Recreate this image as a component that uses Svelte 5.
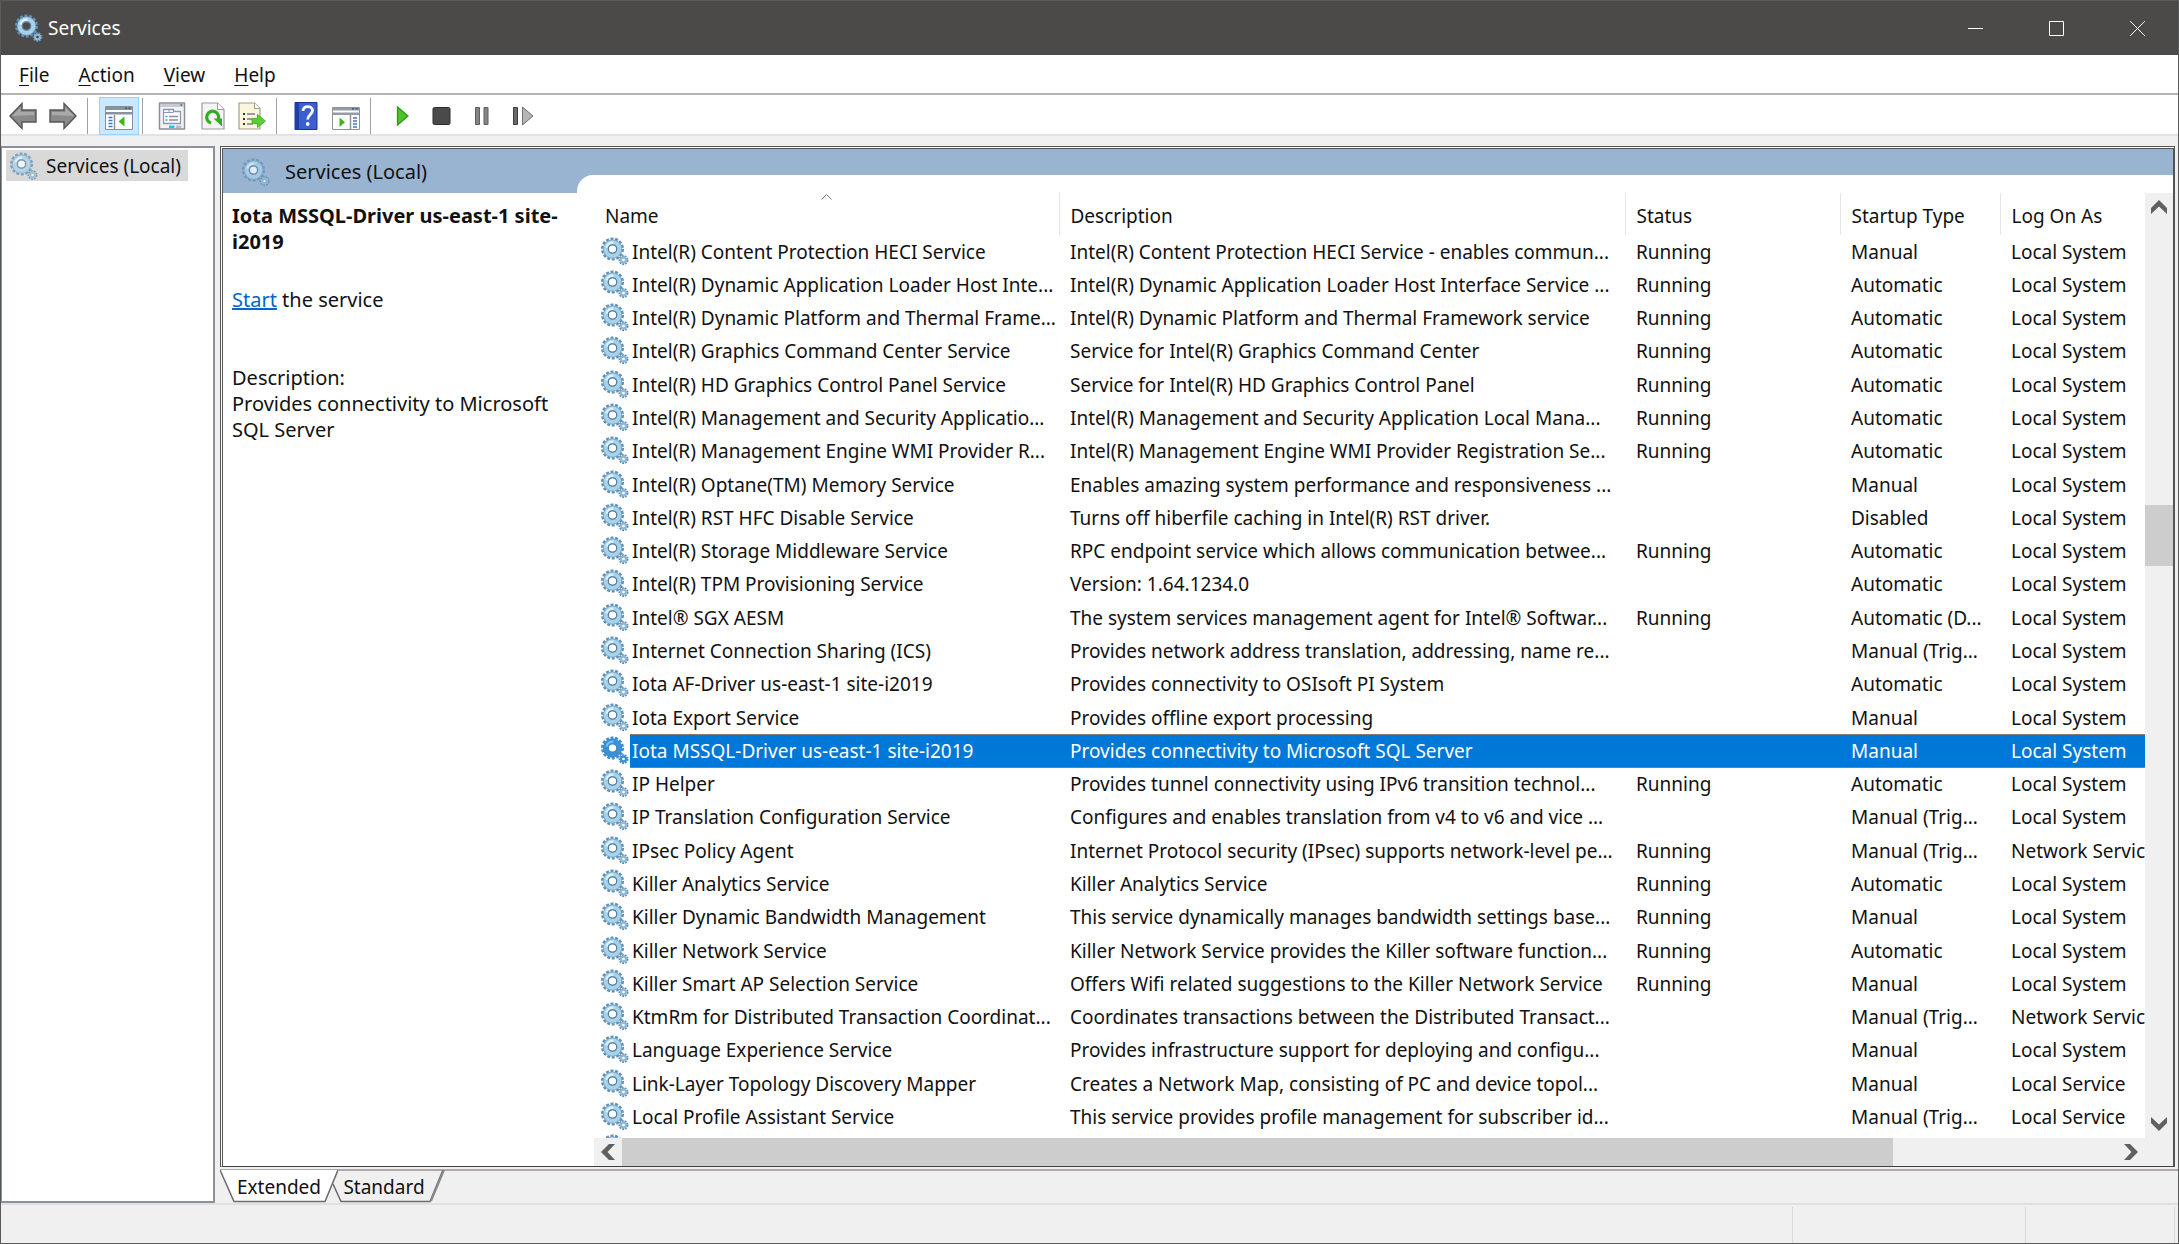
<script lang="ts">
    const menus = ["File", "Action", "View", "Help"];

    const columns = ["Name", "Description", "Status", "Startup Type", "Log On As"];

    let selected = $state(15);

    const services = [
        ["Intel(R) Content Protection HECI Service", "Intel(R) Content Protection HECI Service - enables commun...", "Running", "Manual", "Local System"],
        ["Intel(R) Dynamic Application Loader Host Inte...", "Intel(R) Dynamic Application Loader Host Interface Service ...", "Running", "Automatic", "Local System"],
        ["Intel(R) Dynamic Platform and Thermal Frame...", "Intel(R) Dynamic Platform and Thermal Framework service", "Running", "Automatic", "Local System"],
        ["Intel(R) Graphics Command Center Service", "Service for Intel(R) Graphics Command Center", "Running", "Automatic", "Local System"],
        ["Intel(R) HD Graphics Control Panel Service", "Service for Intel(R) HD Graphics Control Panel", "Running", "Automatic", "Local System"],
        ["Intel(R) Management and Security Applicatio...", "Intel(R) Management and Security Application Local Mana...", "Running", "Automatic", "Local System"],
        ["Intel(R) Management Engine WMI Provider R...", "Intel(R) Management Engine WMI Provider Registration Se...", "Running", "Automatic", "Local System"],
        ["Intel(R) Optane(TM) Memory Service", "Enables amazing system performance and responsiveness ...", "", "Manual", "Local System"],
        ["Intel(R) RST HFC Disable Service", "Turns off hiberfile caching in Intel(R) RST driver.", "", "Disabled", "Local System"],
        ["Intel(R) Storage Middleware Service", "RPC endpoint service which allows communication betwee...", "Running", "Automatic", "Local System"],
        ["Intel(R) TPM Provisioning Service", "Version: 1.64.1234.0", "", "Automatic", "Local System"],
        ["Intel® SGX AESM", "The system services management agent for Intel® Softwar...", "Running", "Automatic (D...", "Local System"],
        ["Internet Connection Sharing (ICS)", "Provides network address translation, addressing, name re...", "", "Manual (Trig...", "Local System"],
        ["Iota AF-Driver us-east-1 site-i2019", "Provides connectivity to OSIsoft PI System", "", "Automatic", "Local System"],
        ["Iota Export Service", "Provides offline export processing", "", "Manual", "Local System"],
        ["Iota MSSQL-Driver us-east-1 site-i2019", "Provides connectivity to Microsoft SQL Server", "", "Manual", "Local System"],
        ["IP Helper", "Provides tunnel connectivity using IPv6 transition technol...", "Running", "Automatic", "Local System"],
        ["IP Translation Configuration Service", "Configures and enables translation from v4 to v6 and vice ...", "", "Manual (Trig...", "Local System"],
        ["IPsec Policy Agent", "Internet Protocol security (IPsec) supports network-level pe...", "Running", "Manual (Trig...", "Network Service"],
        ["Killer Analytics Service", "Killer Analytics Service", "Running", "Automatic", "Local System"],
        ["Killer Dynamic Bandwidth Management", "This service dynamically manages bandwidth settings base...", "Running", "Manual", "Local System"],
        ["Killer Network Service", "Killer Network Service provides the Killer software function...", "Running", "Automatic", "Local System"],
        ["Killer Smart AP Selection Service", "Offers Wifi related suggestions to the Killer Network Service", "Running", "Manual", "Local System"],
        ["KtmRm for Distributed Transaction Coordinat...", "Coordinates transactions between the Distributed Transact...", "", "Manual (Trig...", "Network Service"],
        ["Language Experience Service", "Provides infrastructure support for deploying and configu...", "", "Manual", "Local System"],
        ["Link-Layer Topology Discovery Mapper", "Creates a Network Map, consisting of PC and device topol...", "", "Manual", "Local Service"],
        ["Local Profile Assistant Service", "This service provides profile management for subscriber id...", "", "Manual (Trig...", "Local Service"],
    ];
</script>

{#snippet gear(pale = false)}
    <svg class="gear" class:pale width="28" height="28" viewBox="0 0 28 28" aria-hidden="true">
        <circle cx="11.5" cy="12" r="10" fill="none" stroke="#5f90b6" stroke-width="3" stroke-dasharray="2.9 1.588" />
        <circle cx="11.5" cy="12" r="6.7" fill="none" stroke="#7aa6c8" stroke-width="6" />
        <circle cx="11.5" cy="12" r="6.7" fill="none" stroke="#a8d2ea" stroke-width="4.2" />
        <path d="M5.500 10.500a6.200 6.200 0 0 1 7-4.800" fill="none" stroke="#e0f3fc" stroke-width="2.200" />
        <circle cx="11.500" cy="12" r="4.200" fill="none" stroke="#587f9f" stroke-width="1.300" />
        <circle class="hole" cx="11.500" cy="12" r="3.300" />
        <circle cx="22.500" cy="23" r="4" fill="none" stroke="#5f8db0" stroke-width="2" stroke-dasharray="1.800 .993" />
        <circle cx="22.500" cy="23" r="2.400" fill="none" stroke="#8fb9d5" stroke-width="2.400" />
        <circle class="hole" cx="22.500" cy="23" r="1.100" />
    </svg>
{/snippet}

{#snippet chevron(dir: string)}
    <svg class="chevron {dir}" width="16" height="14" viewBox="0 0 16 14" aria-hidden="true">
        <path d="M0 8L8 0l8 8v6L8 6.500 0 14z" fill="#606060" />
    </svg>
{/snippet}

<div class="window">
    <header class="titlebar">
        {@render gear()}
        <h1>Services</h1>
        <div class="controls">
            <button aria-label="Minimize">
                <svg width="15" height="15" viewBox="0 0 15 15"><path d="M0 7.500h15" /></svg>
            </button>
            <button aria-label="Maximize">
                <svg width="15" height="15" viewBox="0 0 15 15"><path d="M.5.5h14v14H.5z" /></svg>
            </button>
            <button aria-label="Close">
                <svg width="15" height="15" viewBox="0 0 15 15"><path d="M0 0l15 15M15 0L0 15" /></svg>
            </button>
        </div>
    </header>

    <nav class="menubar">
        {#each menus as menu}
            <button><u>{menu[0]}</u>{menu.slice(1)}</button>
        {/each}
    </nav>

    <div class="toolbar">
        <button class="tool" aria-label="Back">
            <svg width="28" height="28" viewBox="0 0 28 28">
                <path d="M1 14L13 1.500V8h14v12H13v6.500z" fill="#8a8a8a" stroke="#555" stroke-width="1.400" />
                <path d="M3 14l8.500-8.700V10H25v3z" fill="#a9a9a9" />
            </svg>
        </button>
        <button class="tool" aria-label="Forward">
            <svg width="28" height="28" viewBox="0 0 28 28">
                <path d="M27 14L15 1.500V8H1v12h14v6.500z" fill="#8a8a8a" stroke="#555" stroke-width="1.400" />
                <path d="M25 14l-8.500-8.700V10H3v3z" fill="#a9a9a9" />
            </svg>
        </button>
        <span class="sep"></span>
        <button class="tool active" aria-label="Show/Hide Console Tree">
            <svg width="28" height="28" viewBox="0 0 28 28">
                <path d="M.5 4.500h27v23H.5z" fill="#fff" stroke="#858d98" />
                <path d="M1 5h26v3H1zM1 10h26v2.500H1z" fill="#8a929d" />
                <path d="M20 5.500h2v1.500h-2zM23.500 5.500h2v1.500h-2z" fill="#3e5a86" />
                <path d="M9.500 13v14" stroke="#8a929d" stroke-width="1.500" />
                <path d="M3.500 15.500h4M3.500 18.500h4M3.500 21.500h4M3.500 24.500h4" stroke="#3b7bc4" stroke-width="1.500" />
                <path d="M19.500 14.500v10L13.500 19.500z" fill="#3fb51f" />
            </svg>
        </button>
        <span class="sep"></span>
        <button class="tool" aria-label="Properties">
            <svg width="28" height="28" viewBox="0 0 28 28">
                <path d="M1.500 1h25v26h-25z" fill="#f4f5f7" stroke="#8a8f99" stroke-width="1.500" />
                <path d="M2 2h24v3H2z" fill="#c5cad3" />
                <path d="M22 2.500h2.500L23.300 4z" fill="#333" />
                <path d="M5.500 12v9.500h17V9.500h-7v-2h-10z" fill="#fff" stroke="#8f97ad" stroke-width="1.300" />
                <path d="M5.500 10.500h10M11 8v2.500" stroke="#8f97ad" />
                <path d="M11 14.500h9M11 18h9" stroke="#8b919c" stroke-width="1.500" />
                <path d="M7.500 14.500h2M7.500 18h2" stroke="#2aa7d8" stroke-width="1.500" />
                <path d="M11 23.500h5.500v2.500H11z" fill="#27c1ee" />
                <path d="M18 23.500h5.500v2.500H18z" fill="#b8bec9" />
            </svg>
        </button>
        <button class="tool" aria-label="Refresh">
            <svg width="28" height="28" viewBox="0 0 28 28">
                <path d="M4 1h15.500L26 7.500V27H4z" fill="#f5f5f5" stroke="#9b9b9b" stroke-width="1.200" />
                <path d="M19.500 1v6.500H26" fill="#fff" stroke="#9b9b9b" />
                <path d="M13 21a6 6 0 1 1 7-3" fill="none" stroke="#2fae22" stroke-width="3.200" />
                <path d="M15.500 16.500H24V24.500z" fill="#2fae22" />
            </svg>
        </button>
        <button class="tool" aria-label="Export List">
            <svg width="28" height="28" viewBox="0 0 28 28">
                <path d="M1 1h15.500L22 6.500V27H1z" fill="#fcf7dc" stroke="#a39e8c" stroke-width="1.200" />
                <path d="M16.500 1v5.500H22" fill="#fff" stroke="#a39e8c" />
                <path d="M5 12h2M5 17h2M5 22h2" stroke="#333" stroke-width="2" />
                <path d="M9 12h8M9 17h6M9 22h6" stroke="#767b9c" stroke-width="1.600" />
                <path d="M14 16.500h5.500V12.500L27.500 19l-8 6.500v-4H14z" fill="#58cf32" stroke="#3aaa1d" stroke-width=".8" />
            </svg>
        </button>
        <span class="sep"></span>
        <button class="tool" aria-label="Help">
            <svg width="28" height="28" viewBox="0 0 28 28">
                <path d="M3 .5h22v27H3z" fill="#3b5fd0" stroke="#1d338f" />
                <path d="M3 1h4v26H3z" fill="#1f40a8" />
                <path d="M11 9c0-6 9.500-5.500 9.500-.5 0 4-4.800 4-4.800 9" fill="none" stroke="#fff" stroke-width="2.800" />
                <circle cx="15.700" cy="22" r="1.900" fill="#fff" />
            </svg>
        </button>
        <button class="tool" aria-label="Show/Hide Action Pane">
            <svg width="28" height="28" viewBox="0 0 28 28">
                <path d="M.5 5.500h27v22H.5z" fill="#fff" stroke="#8f949c" />
                <path d="M1 6h26v2.500H1zM1 10.500h26V13H1z" fill="#969ba4" />
                <path d="M20 6h2v1.500h-2zM23.500 6h2v1.500h-2z" fill="#3e5a86" />
                <path d="M18.500 13v14" stroke="#8a929d" stroke-width="1.500" />
                <path d="M21 16h4M21 19h4M21 22h4M21 25h4" stroke="#3b7bc4" stroke-width="1.500" />
                <path d="M7.500 15.500v9.500l5.500-4.700z" fill="#3fb51f" />
            </svg>
        </button>
        <span class="sep"></span>
        <button class="tool" aria-label="Start Service">
            <svg width="28" height="28" viewBox="0 0 28 28">
                <path d="M11.500 5v18L22 14z" fill="#4cc22b" stroke="#2f9a17" stroke-width="1.300" />
            </svg>
        </button>
        <button class="tool" aria-label="Stop Service">
            <svg width="28" height="28" viewBox="0 0 28 28">
                <rect x="7" y="5.500" width="17" height="17" rx="1.500" fill="#4a4a4a" stroke="#2c2c2c" />
            </svg>
        </button>
        <button class="tool" aria-label="Pause Service">
            <svg width="28" height="28" viewBox="0 0 28 28">
                <path d="M9.500 5.500h4v17h-4zM18 5.500h4v17h-4z" fill="#858585" stroke="#5e5e5e" />
            </svg>
        </button>
        <button class="tool" aria-label="Restart Service">
            <svg width="28" height="28" viewBox="0 0 28 28">
                <path d="M7.500 5.500h4v17h-4z" fill="#6a6a6a" stroke="#3b3b3b" />
                <path d="M16.500 5v18L27 14z" fill="#b5b5b5" stroke="#707070" />
            </svg>
        </button>
    </div>

    <main class="body">
        <aside class="tree">
            <button class="node">{@render gear(true)}<span>Services (Local)</span></button>
        </aside>

        <div class="content">
            <section class="pane">
                <div class="left">
                    <div class="banner">{@render gear(true)}<span>Services (Local)</span></div>
                    <div class="detail">
                        <h2>{services[selected][0]}</h2>
                        <p class="action"><a href="#start">Start</a> the service</p>
                        <p>Description:<br />{services[selected][1]}</p>
                    </div>
                </div>

                <div class="right">
                    <div class="tab-top"><div class="curve"></div></div>
                    <div class="list">
                        <div class="viewport">
                            <table>
                                <colgroup>
                                    <col class="c-icon" />
                                    <col class="c-name" />
                                    <col />
                                    <col class="c-status" />
                                    <col class="c-startup" />
                                    <col class="c-logon" />
                                </colgroup>
                                <thead>
                                    <tr>
                                        {#each columns as column, i}
                                            <th colspan={i == 0 ? 2 : 1}>
                                                {#if i == 0}
                                                    <svg class="sort" width="11" height="6" viewBox="0 0 11 6" aria-hidden="true">
                                                        <path d="M.5 5.500l5-5 5 5" fill="none" stroke="#777" />
                                                    </svg>
                                                {/if}
                                                {column}
                                            </th>
                                        {/each}
                                    </tr>
                                </thead>
                                <tbody>
                                    {#each services as service, i}
                                        <tr class:selected={i == selected} onclick={() => (selected = i)}>
                                            <td class="icon">{@render gear()}</td>
                                            {#each service as value}
                                                <td>{value}</td>
                                            {/each}
                                        </tr>
                                    {/each}
                                </tbody>
                            </table>
                            <div class="next-row">{@render gear()}</div>
                        </div>

                        <div class="vscroll">
                            <button aria-label="Scroll up">{@render chevron("up")}</button>
                            <div class="track"><div class="thumb"></div></div>
                            <button aria-label="Scroll down">{@render chevron("down")}</button>
                        </div>
                    </div>
                    <div class="hscroll">
                        <button aria-label="Scroll left">{@render chevron("to-left")}</button>
                        <div class="track"><div class="thumb"></div></div>
                        <button aria-label="Scroll right">{@render chevron("to-right")}</button>
                    </div>
                </div>
            </section>

            <div class="tabs">
                <button class="tab">
                    <svg viewBox="0 0 118 33" width="118" height="33" aria-hidden="true">
                        <path d="M0 0l14 31.500h91L118 0z" fill="#fff" />
                        <path d="M0 0l14 31.500h91L118 0" fill="none" stroke="#6b6b6b" stroke-width="1.500" />
                    </svg>
                    <span>Extended</span>
                </button>
                <button class="tab second">
                    <svg viewBox="0 0 112 33" width="112" height="33" aria-hidden="true">
                        <path d="M0 14l8 17.500h89L110 0" fill="none" stroke="#6b6b6b" stroke-width="1.500" />
                        <path d="M98 31L111 0" stroke="#8a8a8a" stroke-width="2" />
                    </svg>
                    <span>Standard</span>
                </button>
            </div>
        </div>
    </main>

    <footer class="statusbar">
        <div></div>
        <div class="part"></div>
        <div class="part last"></div>
    </footer>
</div>

<style>
    :global(body) {
        margin: 0;
    }

    .window,
    .window :global(*) {
        box-sizing: border-box;
    }

    .window {
        height: 100vh;
        display: flex;
        flex-direction: column;
        overflow: hidden;
        border: 1px solid #5a5a5a;
        background: #f0f0f0;
        color: #111;
        font-family: "Noto Sans", "Open Sans", sans-serif;
        font-size: 19px;
        line-height: 26px;
    }

    button {
        margin: 0;
        padding: 0;
        border: 0;
        background: none;
        color: inherit;
        font: inherit;
    }

    svg {
        display: block;
        flex: none;
    }

    .hole {
        fill: #fff;
    }

    .pale {
        opacity: 0.75;
    }

    .titlebar {
        flex: none;
        height: 54px;
        display: flex;
        align-items: center;
        padding-left: 14px;
        gap: 5px;
        background: #4c4a48;
        color: #fff;
    }

    .titlebar .hole {
        fill: #4c4a48;
    }

    h1 {
        margin: 0;
        font-size: 19px;
        font-weight: 400;
    }

    .controls {
        margin-left: auto;
        display: flex;
        align-self: stretch;
    }

    .controls button {
        width: 81px;
        display: flex;
        align-items: center;
        justify-content: center;
    }

    .controls path {
        fill: none;
        stroke: #fff;
    }

    .menubar {
        flex: none;
        height: 40px;
        display: flex;
        align-items: center;
        gap: 29px;
        padding: 2px 0 0 18px;
        border-bottom: 2px solid #b4b4b4;
        background: #fff;
    }

    u {
        text-underline-offset: 3px;
    }

    .toolbar {
        flex: none;
        height: 41px;
        display: flex;
        align-items: center;
        gap: 12px;
        padding: 2px 0 0 8px;
        border-bottom: 2px solid #e3e3e3;
        background: #fff;
    }

    .tool {
        width: 28px;
        height: 38px;
        display: flex;
        align-items: center;
        justify-content: center;
    }

    .tool.active {
        width: 40px;
        margin: 0 -7px 0 -4px;
        border: 1px solid #99d1ff;
        background: #cce8ff;
    }

    .sep {
        width: 1px;
        height: 36px;
        margin: 0 3px 0 -2px;
        background: #a0a0a0;
    }

    .body {
        flex: 1;
        min-height: 0;
        display: flex;
        gap: 5px;
        padding-top: 10px;
    }

    .tree {
        width: 214px;
        border: 2px solid #8c909c;
        border-left-width: 1px;
        background: #fff;
        padding: 2px 4px;
    }

    .node {
        height: 31px;
        display: flex;
        align-items: center;
        gap: 8px;
        padding: 0 7px 0 4px;
        background: #d9d9d9;
    }

    .content {
        flex: 1;
        min-width: 0;
        display: flex;
        flex-direction: column;
    }

    .pane {
        flex: 1;
        min-height: 0;
        display: flex;
        margin-right: 3px;
        border: 3px double #555;
        border-bottom: 1px solid #404040;
        border-right-width: 2px;
        background: #fff;
    }

    .left {
        width: 371px;
        font-size: 20px;
    }

    .banner {
        height: 44px;
        display: flex;
        align-items: center;
        gap: 15px;
        padding: 2px 0 0 19px;
        background: #99b4d1;
    }

    .detail {
        padding: 10px 8px 0 9px;
    }

    h2 {
        margin: 0;
        font-size: 20px;
        line-height: 26px;
    }

    p {
        margin: 0;
    }

    .action {
        padding: 32px 0 52px;
    }

    a {
        color: #0066cc;
    }

    .right {
        flex: 1;
        min-width: 0;
        display: flex;
        flex-direction: column;
    }

    .tab-top {
        height: 44px;
        margin-left: -17px;
        padding-top: 26px;
        background: #99b4d1;
    }

    .curve {
        height: 18px;
        border-top-left-radius: 16px;
        background: #fff;
    }

    .list {
        flex: 1;
        min-height: 0;
        display: flex;
    }

    .viewport {
        flex: 1;
        min-width: 0;
        overflow: hidden;
        display: flex;
        flex-direction: column;
    }

    table {
        flex: 1;
        width: 100%;
        table-layout: fixed;
        border-collapse: collapse;
    }

    .c-icon {
        width: 36px;
    }

    .c-name {
        width: 429px;
    }

    .c-status {
        width: 215px;
    }

    .c-startup {
        width: 160px;
    }

    .c-logon {
        width: 145px;
    }

    th {
        position: relative;
        height: 42px;
        padding: 3px 0 0 11px;
        border-right: 1px solid #e5e5e5;
        font-weight: 400;
        text-align: left;
    }

    th:last-child {
        border-right: 0;
    }

    .sort {
        position: absolute;
        top: 1px;
        left: calc(50% - 5px);
    }

    td {
        height: 33px;
        padding: 0 0 0 11px;
        overflow: hidden;
        white-space: nowrap;
        line-height: 26px;
    }

    .icon {
        padding: 0 0 2px 7px;
    }

    .icon + td {
        padding-left: 2px;
    }

    .selected td:not(.icon) {
        background: #0078d7;
        color: #fff;
        box-shadow: inset 0 1px #8a7a6a, inset 0 -1px #8a7a6a;
    }

    .selected :global(.gear circle:not(.hole)) {
        stroke: #3d8fd2;
    }

    .selected :global(.gear path) {
        stroke: #79bbee;
    }

    .next-row {
        flex: none;
        height: 4px;
        overflow: hidden;
        padding-left: 7px;
    }

    .vscroll,
    .hscroll {
        flex: none;
        display: flex;
        background: #f0f0f0;
    }

    .vscroll {
        width: 28px;
        flex-direction: column;
    }

    .hscroll {
        height: 28px;
        padding-right: 28px;
    }

    .vscroll button,
    .hscroll button {
        width: 28px;
        height: 28px;
        display: flex;
        align-items: center;
        justify-content: center;
    }

    .track {
        flex: 1;
        display: flex;
    }

    .thumb {
        background: #cdcdcd;
    }

    .vscroll .track {
        flex-direction: column;
        padding-top: 284px;
    }

    .vscroll .thumb {
        height: 61px;
    }

    .hscroll .thumb {
        width: 85%;
    }

    .down {
        transform: rotate(180deg);
    }

    .to-left {
        transform: rotate(-90deg);
    }

    .to-right {
        transform: rotate(90deg);
    }

    .tabs {
        flex: none;
        height: 34px;
        margin-top: 2px;
        display: flex;
        border-top: 2px solid #aca8ac;
    }

    .tab {
        position: relative;
        height: 32px;
        width: 118px;
    }

    .tab.second {
        width: 102px;
        margin-left: -5px;
    }

    .tab svg {
        position: absolute;
        top: -1px;
        left: 0;
    }

    .tab span {
        position: relative;
    }

    .statusbar {
        flex: none;
        height: 40px;
        display: flex;
        border-top: 2px solid #e0e0e0;
    }

    .statusbar div {
        flex: 1;
    }

    .statusbar .part {
        flex: none;
        width: 233px;
        margin-top: 2px;
        border-left: 1px solid #d9d9d9;
    }

    .statusbar .last {
        width: 150px;
        border-right: 1px solid #d9d9d9;
        margin-right: 3px;
    }
</style>
